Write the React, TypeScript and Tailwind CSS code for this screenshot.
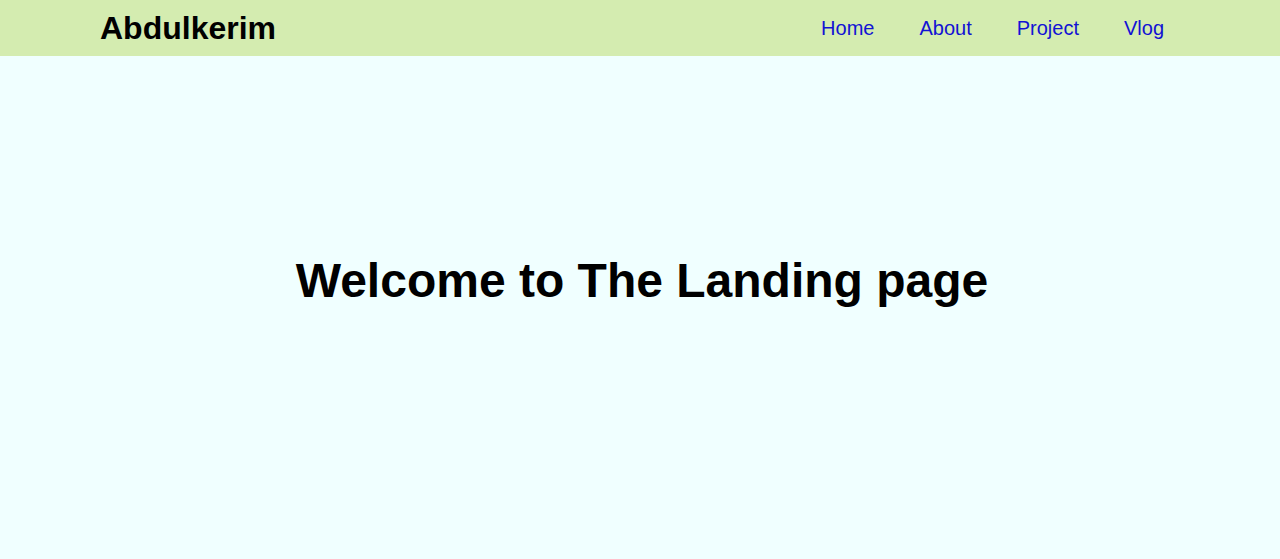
import React from 'react';

const links = ['Home', 'About', 'Project', 'Vlog'];

const App: React.FC = () => {
  return (
    <div className="min-h-screen bg-[#f0ffff]" style={{ fontFamily: '"Liberation Sans", Arial, sans-serif' }}>
      <header className="h-14 bg-[#d4ecb0] flex items-center justify-between pl-[100px] pr-[116px]">
        <h2 className="text-[32px] font-bold text-black leading-none">Abdulkerim</h2>
        <nav className="flex items-center gap-[45px]">
          {links.map((l) => (
            <a key={l} href="#" className="text-[20px] text-[#1212d4]">
              {l}
            </a>
          ))}
        </nav>
      </header>
      <main className="pt-[189px] pl-1 flex justify-center">
        <h1 className="text-[48px] font-bold text-black">Welcome to The Landing page</h1>
      </main>
    </div>
  );
};

export default App;
